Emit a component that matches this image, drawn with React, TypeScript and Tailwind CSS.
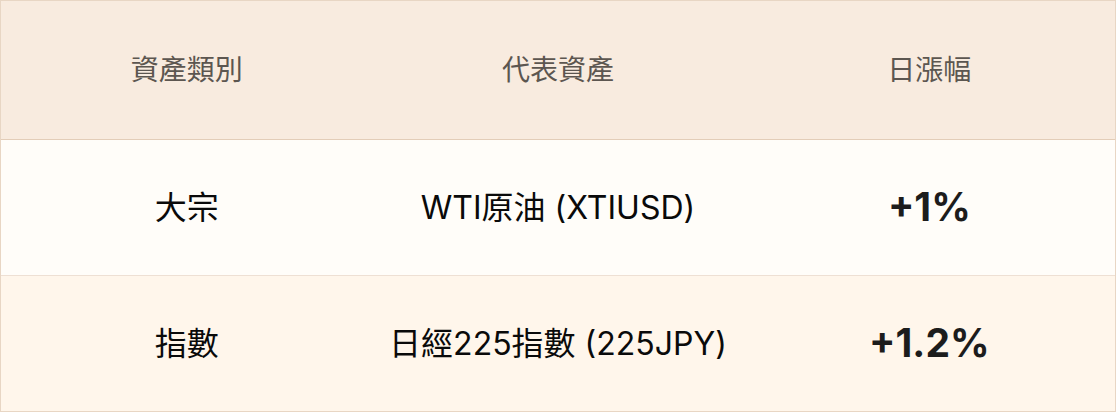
import React from "react";

const font = { fontFamily: 'Inter, "Noto Sans CJK TC", sans-serif' };

export default function App() {
  const rows = [
    { cat: "大宗", asset: "WTI原油 (XTIUSD)", chg: "+1%", bg: "bg-[#fffdf9]" },
    { cat: "指數", asset: "日經225指數 (225JPY)", chg: "+1.2%", bg: "bg-[#fff6eb]" },
  ];
  return (
    <div className="w-[1116px] h-[412px] border border-[#e8d6c4] flex flex-col" style={font}>
      <div className="grid grid-cols-3 h-[139px] bg-[#f8ebdf] border-b border-[#e3cdb8] items-center text-center text-[28px] text-[#5c5650]">
        <div>資產類別</div>
        <div>代表資產</div>
        <div>日漲幅</div>
      </div>
      {rows.map((r, i) => (
        <div
          key={i}
          className={`grid grid-cols-3 flex-1 items-center text-center ${r.bg} ${i === 0 ? "border-b border-[#eee0d4]" : ""}`}
        >
          <div className="text-[32px] text-[#0a0a0a]">{r.cat}</div>
          <div className="text-[32px] text-[#0a0a0a]">{r.asset}</div>
          <div className="text-[39px] font-bold text-[#1c1c1c]">{r.chg}</div>
        </div>
      ))}
    </div>
  );
}
